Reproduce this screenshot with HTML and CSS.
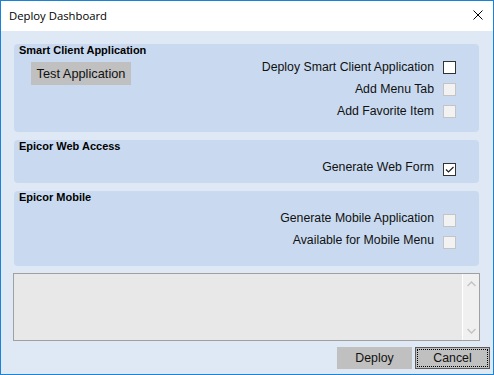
FILE: index.html
```html
<!DOCTYPE html>
<html lang="en">
<head>
    <meta charset="UTF-8">
    <title>Deploy Dashboard</title>
    <link rel="stylesheet" href="styles.css">
</head>
<body>
    <div class="window">
        <div class="titlebar">
            <span class="title">Deploy Dashboard</span>
            <svg class="close" width="10" height="10" viewBox="0 0 10 10">
                <path d="M0.5 0.5 L9.5 9.5 M9.5 0.5 L0.5 9.5" stroke="#000" stroke-width="1" fill="none"/>
            </svg>
        </div>

        <div class="content">
            <div class="group group-smart">
                <div class="group-title">Smart Client Application</div>
                <div class="group-body">
                    <button class="btn test-btn">Test Application</button>
                    <div class="rows">
                        <div class="row"><span>Deploy Smart Client Application</span><span class="check"></span></div>
                        <div class="row"><span>Add Menu Tab</span><span class="check disabled"></span></div>
                        <div class="row"><span>Add Favorite Item</span><span class="check disabled"></span></div>
                    </div>
                </div>
            </div>

            <div class="group group-web">
                <div class="group-title">Epicor Web Access</div>
                <div class="rows">
                    <div class="row">
                        <span>Generate Web Form</span>
                        <span class="check">
                            <svg width="11" height="11" viewBox="0 0 11 11">
                                <path d="M2 5.5 L4.5 8 L9.5 3" stroke="#222" stroke-width="1.2" fill="none"/>
                            </svg>
                        </span>
                    </div>
                </div>
            </div>

            <div class="group group-mobile">
                <div class="group-title">Epicor Mobile</div>
                <div class="rows">
                    <div class="row"><span>Generate Mobile Application</span><span class="check disabled"></span></div>
                    <div class="row"><span>Available for Mobile Menu</span><span class="check disabled"></span></div>
                </div>
            </div>

            <div class="log">
                <div class="log-text"></div>
                <div class="scrollbar">
                    <svg width="9" height="6" viewBox="0 0 9 6"><path d="M0.5 5 L4.5 1 L8.5 5" stroke="#c4c4c4" stroke-width="1.5" fill="none"/></svg>
                    <svg width="9" height="6" viewBox="0 0 9 6"><path d="M0.5 1 L4.5 5 L8.5 1" stroke="#c4c4c4" stroke-width="1.5" fill="none"/></svg>
                </div>
            </div>

            <div class="actions">
                <button class="btn">Deploy</button>
                <button class="btn focused"><span>Cancel</span></button>
            </div>
        </div>
    </div>
</body>
</html>
```

FILE: styles.css
```css
* {
    box-sizing: border-box;
    margin: 0;
    padding: 0;
}

body {
    font-family: 'Liberation Sans', Arial, sans-serif;
    font-size: 12.3px;
    color: #111;
    background: #fff;
}

.window {
    width: 494px;
    height: 375px;
    border: 1px solid #1883d7;
    background: #dfe8f5;
    display: flex;
    flex-direction: column;
}

.titlebar {
    height: 30px;
    background: #fff;
    display: flex;
    align-items: center;
    justify-content: space-between;
    padding: 0 10px 0 8px;
}

.title {
    font-family: 'Open Sans', 'Noto Sans', sans-serif;
    font-size: 11.3px;
    color: #000;
    margin-top: -1px;
}

.close {
    margin-top: -2px;
}

.content {
    padding: 13px 3px 0 12px;
    display: flex;
    flex-direction: column;
}

.group {
    width: 465px;
    margin-left: 1px;
    background: #c9daf0;
    border-radius: 4px;
    padding: 1px 23px 0 5px;
    margin-bottom: 8px;
}

.group-title {
    font-weight: bold;
    font-size: 11px;
    line-height: 11px;
    color: #000;
}

.group-smart {
    height: 88px;
}

.group-web {
    height: 43px;
}

.group-mobile {
    height: 75px;
    margin-bottom: 7px;
}

.group-web .rows,
.group-mobile .rows {
    margin-top: 6px;
}

.group-web .row span:first-child,
.group-mobile .row span:first-child {
    margin-top: -4px;
}

.group-body {
    display: flex;
    justify-content: space-between;
}

.rows {
    display: flex;
    flex-direction: column;
    align-items: flex-end;
}

.row {
    height: 22px;
    display: flex;
    align-items: center;
    gap: 9px;
}

.check {
    width: 13px;
    height: 13px;
    border: 1px solid #333;
    background: #fff;
    display: flex;
    align-items: center;
    justify-content: center;
}

.check.disabled {
    border-color: #c4c4c4;
    background: #f2f2f2;
}

.btn {
    font-family: 'Liberation Sans', Arial, sans-serif;
    font-size: 12.3px;
    color: #111;
    background: #c0c0c0;
    border: none;
    width: 75px;
    height: 22px;
}

.test-btn {
    width: 100px;
    height: 23px;
    margin: 6px 0 0 12px;
    font-size: 12.8px;
}

.log {
    width: 467px;
    height: 68px;
    border: 1px solid #a0a0a0;
    background: #e8e8e8;
    display: flex;
}

.log-text {
    flex: 1;
}

.scrollbar {
    width: 17px;
    border-left: 1px solid #fff;
    background: #f0f0f0;
    display: flex;
    flex-direction: column;
    justify-content: space-between;
    align-items: center;
    padding: 7px 0 6px;
}

.actions {
    display: flex;
    justify-content: flex-end;
    gap: 3px;
    margin-top: 6px;
}

.btn.focused {
    border: 1px solid #5a5a5a;
    padding: 1px;
}

.btn.focused span {
    display: flex;
    align-items: center;
    justify-content: center;
    height: 100%;
    border: 1px dotted #000;
}
```
